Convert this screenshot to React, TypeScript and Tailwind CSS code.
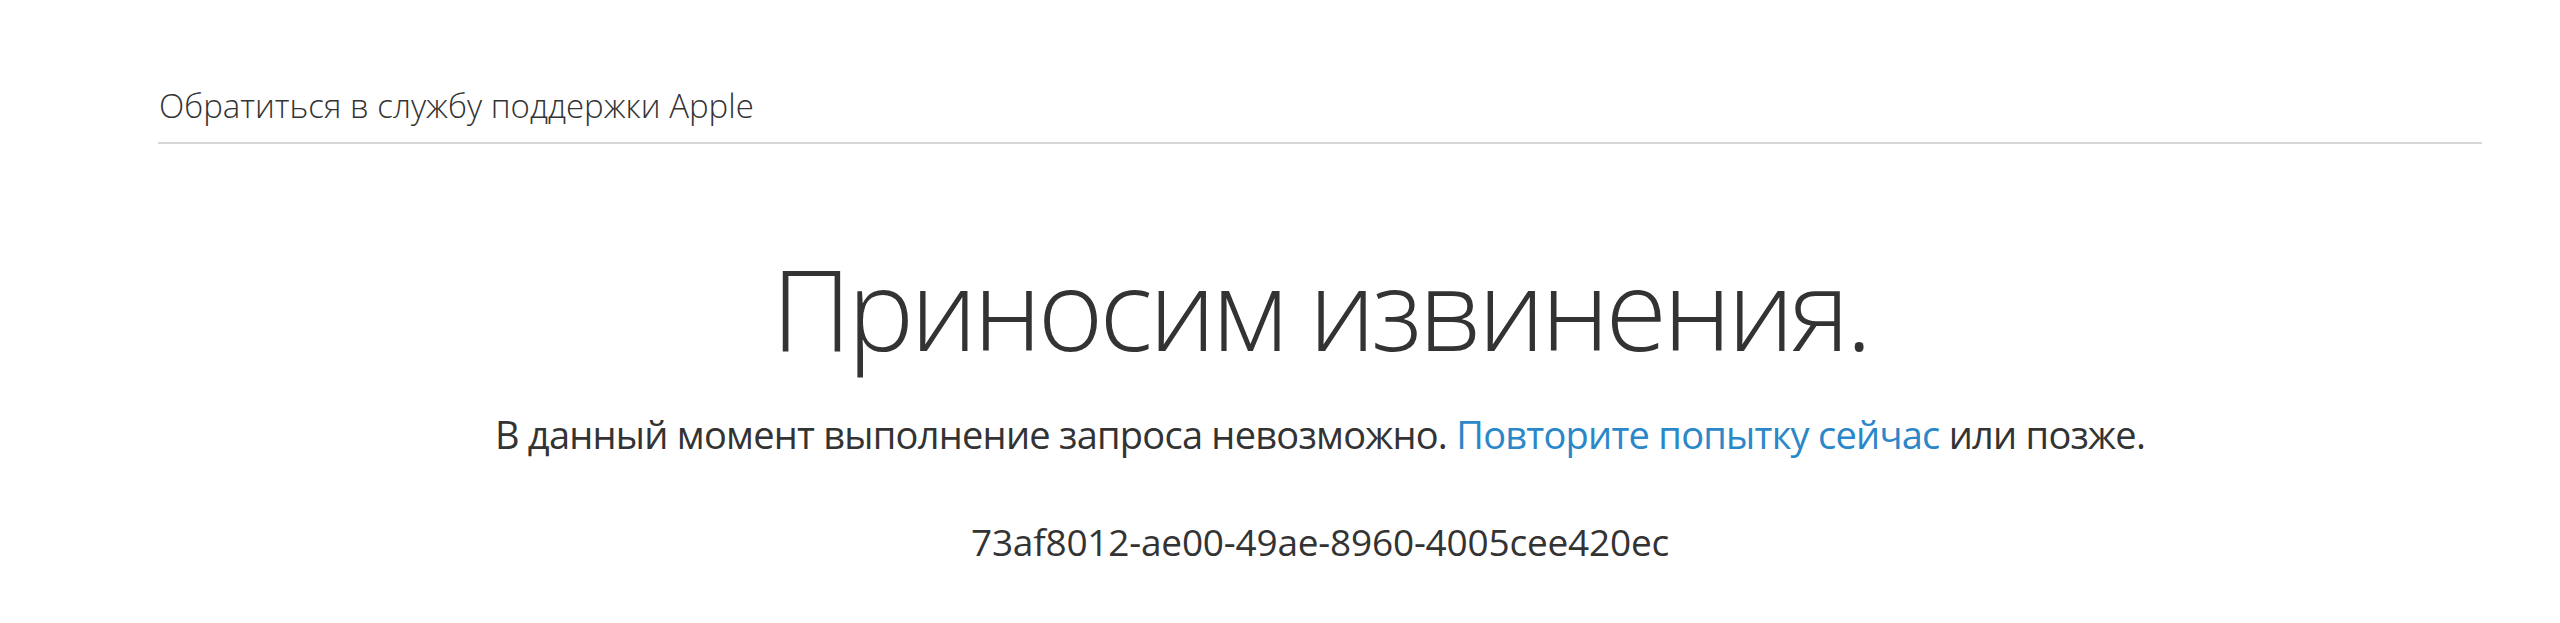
import React from 'react';

const ERROR_ID = '73af8012-ae00-49ae-8960-4005cee420ec';

export default function App() {
    return (
        <div className="min-h-[623px] bg-white text-[#333333]" style={{ fontFamily: '"Open Sans", "Noto Sans", sans-serif' }}>
            <div className="ml-[158px] w-[2324px]">
                <header className="pt-[89px]">
                    <a href="#" className="block pl-[1px] text-[33px] font-light leading-none text-[#333333]">
                        Обратиться в службу поддержки Apple
                    </a>
                    <div className="mt-[20px] h-[2px] bg-[#d6d6d6]"></div>
                </header>

                <main className="flex flex-col items-center text-center">
                    <h1 className="mt-[108px] text-[112px] font-light leading-none tracking-[-4px]">
                        Приносим извинения.
                    </h1>
                    <p className="mt-[51px] text-[38px] leading-none tracking-[-0.75px]">
                        В данный момент выполнение запроса невозможно.{' '}
                        <a href="#" className="text-[#2a87c9]">Повторите попытку сейчас</a> или позже.
                    </p>
                    <p className="mt-[70px] text-[37px] leading-none tracking-[-0.2px]">{ERROR_ID}</p>
                </main>
            </div>
        </div>
    );
}
